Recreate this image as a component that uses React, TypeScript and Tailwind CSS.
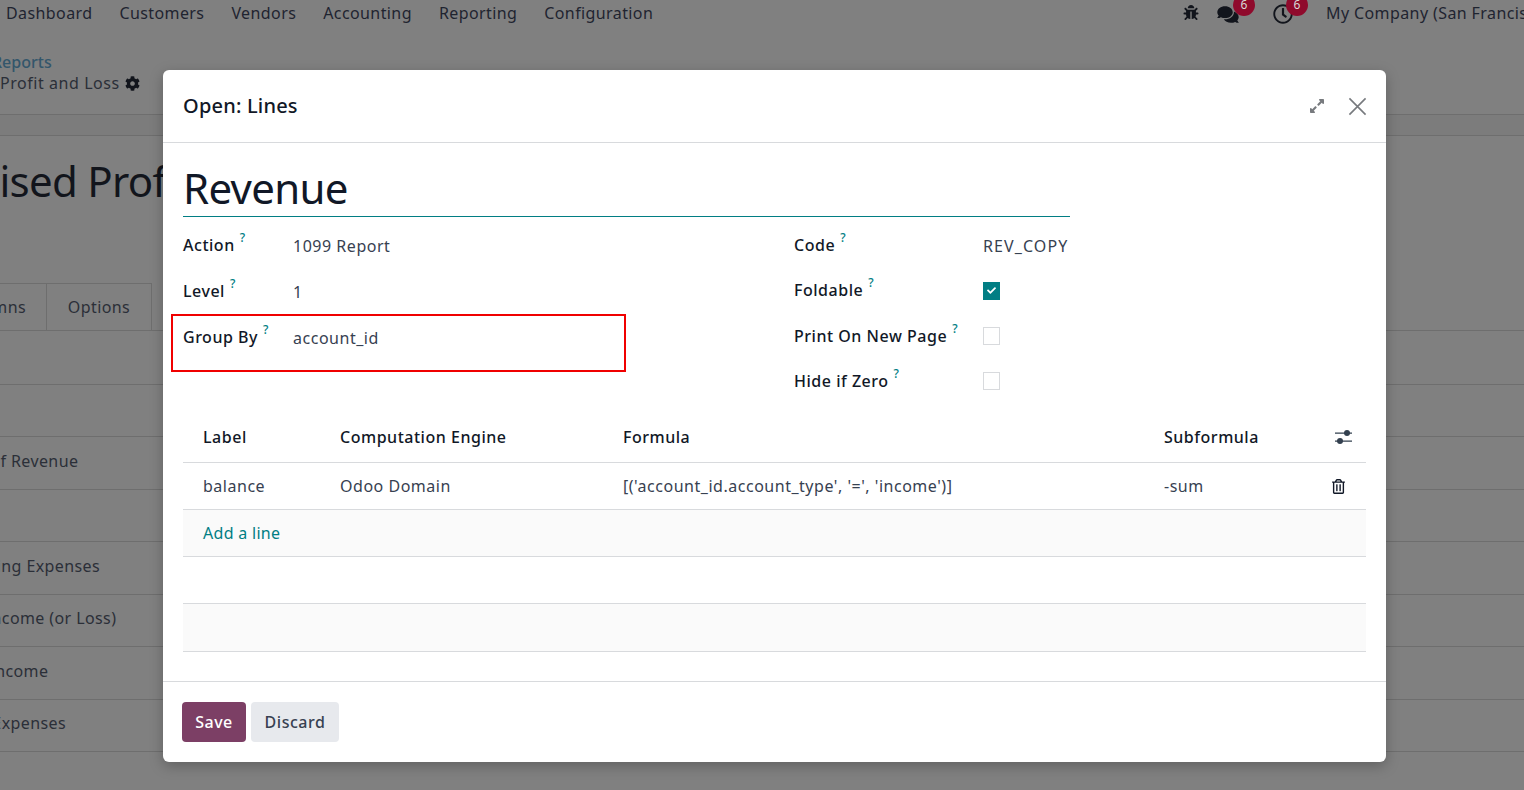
import { FaBug, FaCheck, FaCog, FaComments, FaExpandAlt, FaRegClock, FaRegTrashAlt } from 'react-icons/fa';

const navItems = ['Dashboard', 'Customers', 'Vendors', 'Accounting', 'Reporting', 'Configuration'];

const bgRows = [
  { label: '', h: 'h-[54px]' },
  { label: '', h: 'h-[52px]' },
  { label: 'Cost of Revenue', h: 'h-[53px]', ml: '-ml-[49px]' },
  { label: '', h: 'h-[52px]' },
  { label: 'Operating Expenses', h: 'h-[53px]', ml: '-ml-[58px]' },
  { label: 'Net Income (or Loss)', h: 'h-[52px]', ml: '-ml-[47px]' },
  { label: 'Other Income', h: 'h-[53px]', ml: '-ml-[61px]' },
  { label: 'Other Expenses', h: 'h-[52px]', ml: '-ml-[58px]' },
];

const Help = () => <sup className="ml-[5px] text-[12px] font-medium text-[#017e84] relative -top-[9px] tracking-normal">?</sup>;

const Field = ({ label, value, width, h, labelClass = '-translate-y-[1px]' }: { label: string; value?: React.ReactNode; width: string; h: string; labelClass?: string }) => (
  <div className={`flex items-center ${h}`}>
    <div className={`${width} shrink-0 font-medium text-[#111827] ${labelClass}`}>
      {label}
      <Help />
    </div>
    <div className="text-[#374151]">{value}</div>
  </div>
);

const Checkbox = ({ checked }: { checked?: boolean }) =>
  checked ? (
    <div className="w-[17px] h-[18px] bg-[#017e84] flex items-center justify-center">
      <FaCheck className="w-[9px] h-[9px] text-white" />
    </div>
  ) : (
    <div className="w-[17px] h-[18px] bg-white border border-[#d8dadd]" />
  );

const Badge = ({ left }: { left: string }) => (
  <div className="relative w-0 h-0">
    <span className={`absolute ${left} -top-[19px] w-[22px] h-[22px] rounded-full bg-[#8f0a2c] text-[#d8d8d8] text-[12px] tracking-normal flex items-center justify-center`}>6</span>
  </div>
);

export default function App() {
  return (
    <div className="relative w-[1524px] h-[790px] overflow-hidden bg-[#808080] text-[16px] tracking-[0.4px] text-[#1f2430] font-['Noto_Sans',sans-serif]">
      {/* page behind the dialog */}
      <div className="flex items-center justify-between h-[26px] pl-[6px]">
        <div className="flex gap-[27px]">
          {navItems.map((item) => (
            <span key={item}>{item}</span>
          ))}
        </div>
        <div className="flex items-center whitespace-nowrap w-[343px] shrink-0">
          <FaBug className="shrink-0 w-[16px] h-[15px] ml-[2px] -mt-[2px] text-[#12151c]" />
          <FaComments className="shrink-0 w-[22px] h-[19px] ml-[18px] mt-[2px] text-[#12151c]" />
          <Badge left="-left-[6px]" />
          <FaRegClock className="shrink-0 w-[20px] h-[20px] ml-[34px] mt-[1px] text-[#12151c]" />
          <Badge left="-left-[7px]" />
          <span className="ml-[33px] shrink-0">My Company (San Francisco)</span>
        </div>
      </div>
      <div className="h-[89px] pt-[26px] border-b border-[#6e6e6e] leading-[21px]">
        <div className="-ml-[8px] font-medium tracking-normal text-[#33566b]">Reports</div>
        <div className="flex items-center gap-[5px] text-[#2b2f38] tracking-[0.55px]">
          Profit and Loss <FaCog className="w-[15px] h-[15px] text-[#12151c]" />
        </div>
      </div>
      <div className="h-[21px] border-b border-[#6e6e6e] bg-[#7c7c7c]" />
      <div className="h-[147px] w-[163px] overflow-hidden pt-[15px]">
        <div className="-ml-[82px] text-[42px] tracking-[-0.7px] leading-[60px] text-[#12151c] whitespace-nowrap">Realised Profit</div>
      </div>
      <div className="flex h-[48px] border-b border-[#6e6e6e] text-[#2b2f38]">
        <div className="w-[47px] border-t border-r border-[#6e6e6e] flex items-center justify-end pr-[20px]">mns</div>
        <div className="w-[105px] border-t border-r border-[#6e6e6e] flex items-center justify-center">Options</div>
      </div>
      {bgRows.map((row, i) => (
        <div key={i} className={`${row.h} pb-[5px] border-b border-[#6e6e6e] flex items-center text-[#2b2f38] whitespace-nowrap`}>
          <span className={row.ml}>{row.label}</span>
        </div>
      ))}

      {/* dialog */}
      <div className="absolute left-[163px] top-[70px] w-[1223px] h-[692px] bg-white rounded-[6px] shadow-[0_4px_14px_rgba(0,0,0,0.25)] flex flex-col tracking-[0.52px]">
        <div className="h-[73px] shrink-0 border-b border-[#d8dadd] flex items-center justify-between pl-[20px] pr-[19px]">
          <span className="text-[20px] tracking-[0.2px] font-medium text-[#111827]">Open: Lines</span>
          <div className="flex items-center gap-[23px] text-[#777a7e]">
            <FaExpandAlt className="w-[16px] h-[16px]" />
            <svg viewBox="0 0 20 20" className="w-[19px] h-[19px]" fill="none" stroke="currentColor" strokeWidth="1.7">
              <path d="M1.5 1.5 18.5 18.5M18.5 1.5 1.5 18.5" />
            </svg>
          </div>
        </div>

        <div className="flex-1 px-[20px]">
          <div className="w-[887px] h-[74px] pt-[15px] border-b border-[#017e84] text-[42px] tracking-[-0.7px] leading-[60px] text-[#111827]">Revenue</div>
          <div className="flex mt-[6px] w-[887px]">
            <div className="w-[611px]">
              <Field label="Action" value="1099 Report" width="w-[110px]" h="h-[46px]" />
              <Field label="Level" value="1" width="w-[110px]" h="h-[46px]" />
              <Field label="Group By" value="account_id" width="w-[110px]" h="h-[46px]" />
            </div>
            <div>
              <Field label="Code" value={<span className="tracking-[1.1px]">REV_COPY</span>} width="w-[189px]" h="h-[45px]" />
              <Field label="Foldable" value={<Checkbox checked />} width="w-[189px]" h="h-[45px]" />
              <Field label="Print On New Page" value={<Checkbox />} width="w-[189px]" h="h-[45px]" labelClass="" />
              <Field label="Hide if Zero" value={<Checkbox />} width="w-[189px]" h="h-[45px]" labelClass="" />
            </div>
          </div>

          <div className="mt-[10px] w-[1183px]">
            <div className="flex items-center h-[50px] pb-[2px] border-b border-[#d8dadd] font-medium text-[#111827]">
              <div className="w-[157px] pl-[20px]">Label</div>
              <div className="w-[283px]">Computation Engine</div>
              <div className="w-[541px]">Formula</div>
              <div className="flex-1">Subformula</div>
              <svg viewBox="0 0 17 14" className="w-[17px] h-[14px] mr-[14px] text-[#33404f]" fill="currentColor">
                <path d="M0 2.5h17v1.2H0zM0 10.5h17v1.2H0z" />
                <circle cx="12" cy="3" r="3" />
                <circle cx="5" cy="11" r="3" />
              </svg>
            </div>
            <div className="flex items-center h-[47px] border-b border-[#d8dadd] text-[#374151]">
              <div className="w-[157px] pl-[20px]">balance</div>
              <div className="w-[283px]">Odoo Domain</div>
              <div className="w-[541px]">[('account_id.account_type', '=', 'income')]</div>
              <div className="flex-1">-sum</div>
              <FaRegTrashAlt className="w-[13px] h-[15px] mr-[21px] text-[#111827]" />
            </div>
            <div className="flex items-center h-[47px] border-b border-[#d8dadd] bg-[#fafafa] pl-[20px] tracking-[0.3px] text-[#017e84]">Add a line</div>
            <div className="h-[47px] border-b border-[#d8dadd]" />
            <div className="h-[48px] border-b border-[#d8dadd] bg-[#fafafa]" />
          </div>
        </div>

        <div className="h-[81px] shrink-0 border-t border-[#d8dadd] flex items-start gap-[5px] pt-[20px] pl-[19px] font-medium">
          <button className="w-[64px] h-[40px] rounded-[4px] bg-[#7c3f65] text-white">Save</button>
          <button className="w-[88px] h-[40px] rounded-[4px] bg-[#e7e9ed] text-[#374151]">Discard</button>
        </div>

        {/* highlight drawn over the form */}
        <div className="absolute left-[8px] top-[244px] w-[455px] h-[58px] border-2 border-[#f00000]" />
      </div>
    </div>
  );
}
